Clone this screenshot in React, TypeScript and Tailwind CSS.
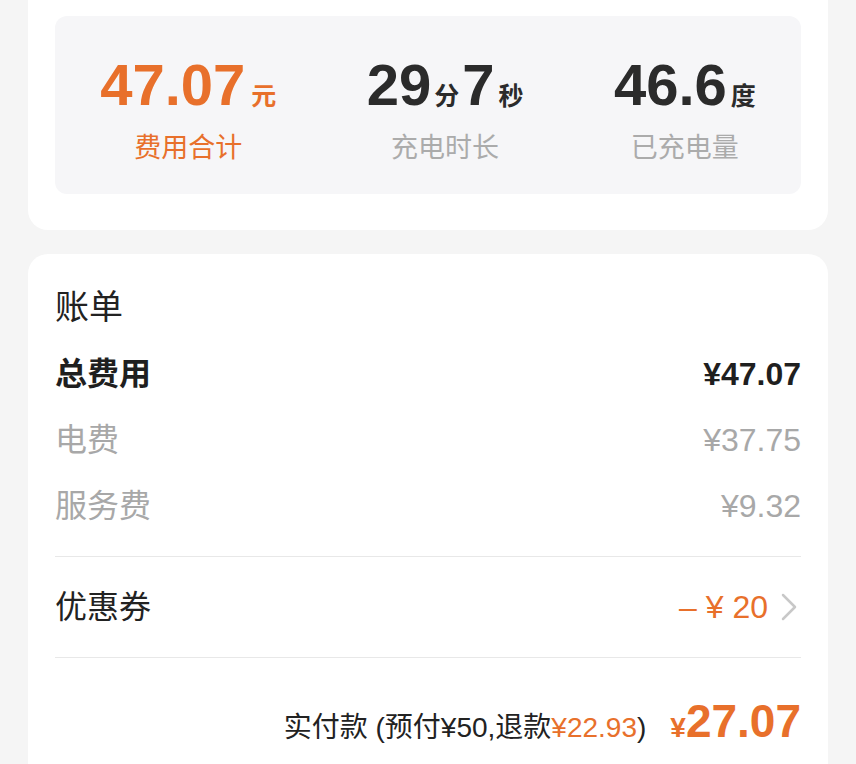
import React from "react";

const font = { fontFamily: '"Liberation Sans", "Noto Sans CJK SC", sans-serif' };

function Stat({ children, label, orange }: { children: React.ReactNode; label: string; orange?: boolean }) {
  return (
    <div className="flex flex-col items-center">
      <div className="flex items-baseline leading-none h-[58px]">{children}</div>
      <div className={`mt-[21px] text-[27px] leading-[27px] ${orange ? "text-[#e8702b]" : "text-[#ababab]"}`}>{label}</div>
    </div>
  );
}

export default function App() {
  return (
    <div className="min-h-[764px] bg-[#f5f5f5]" style={font}>
      <div className="mx-[28px] rounded-b-[20px] bg-white px-[27px] pt-[16px] pb-[36px]">
        <div className="flex h-[178px] items-start justify-around rounded-[12px] bg-[#f6f6f8] pt-[40px]">
          <Stat label="费用合计" orange>
            <span className="text-[58px] font-bold text-[#e8702b]">47.07</span>
            <span className="ml-[6px] text-[25px] font-bold text-[#e8702b]">元</span>
          </Stat>
          <Stat label="充电时长">
            <span className="text-[58px] font-bold text-[#2b2b2b]">29</span>
            <span className="mx-[3px] text-[25px] font-bold text-[#2b2b2b]">分</span>
            <span className="text-[58px] font-bold text-[#2b2b2b]">7</span>
            <span className="ml-[4px] text-[25px] font-bold text-[#2b2b2b]">秒</span>
          </Stat>
          <Stat label="已充电量">
            <span className="text-[58px] font-bold text-[#2b2b2b]">46.6</span>
            <span className="ml-[4px] text-[25px] font-bold text-[#2b2b2b]">度</span>
          </Stat>
        </div>
      </div>

      <div className="mx-[28px] mt-[24px] rounded-t-[20px] bg-white px-[27px] pt-[36px]">
        <div className="text-[34px] leading-[34px] text-[#222]">账单</div>
        <div className="mt-[17px]">
          <div className="flex h-[66px] items-center justify-between text-[32px]">
            <span className="font-bold text-[#1f1f1f]">总费用</span>
            <span className="font-bold text-[#1f1f1f]">¥47.07</span>
          </div>
          <div className="flex h-[66px] items-center justify-between text-[32px] text-[#a8a8a8]">
            <span>电费</span>
            <span>¥37.75</span>
          </div>
          <div className="flex h-[66px] items-center justify-between text-[32px] text-[#a8a8a8]">
            <span>服务费</span>
            <span>¥9.32</span>
          </div>
        </div>
        <div className="mt-[17px] h-px bg-[#e8e8e8]" />
        <div className="flex h-[100px] items-center justify-between">
          <span className="text-[32px] text-[#222]">优惠券</span>
          <div className="flex items-center">
            <span className="text-[32px] text-[#e8702b]">– ¥ 20</span>
            <svg className="ml-[12px] mr-[3px]" width="18" height="30" viewBox="0 0 18 30" fill="none">
              <polyline points="3,3 15,15 3,27" stroke="#c8c8c8" strokeWidth="2.5" strokeLinecap="round" strokeLinejoin="round" />
            </svg>
          </div>
        </div>
        <div className="h-px bg-[#e8e8e8]" />
        <div className="flex items-baseline justify-end pt-[40px] pb-[20px]">
          <span className="text-[28px] text-[#222]">
            实付款 (预付¥50,退款<span className="text-[#e8702b]">¥22.93</span>)
          </span>
          <span className="ml-[24px] text-[28px] font-bold text-[#e8702b]">¥</span>
          <span className="text-[46px] font-bold leading-none text-[#e8702b]">27.07</span>
        </div>
      </div>
    </div>
  );
}
